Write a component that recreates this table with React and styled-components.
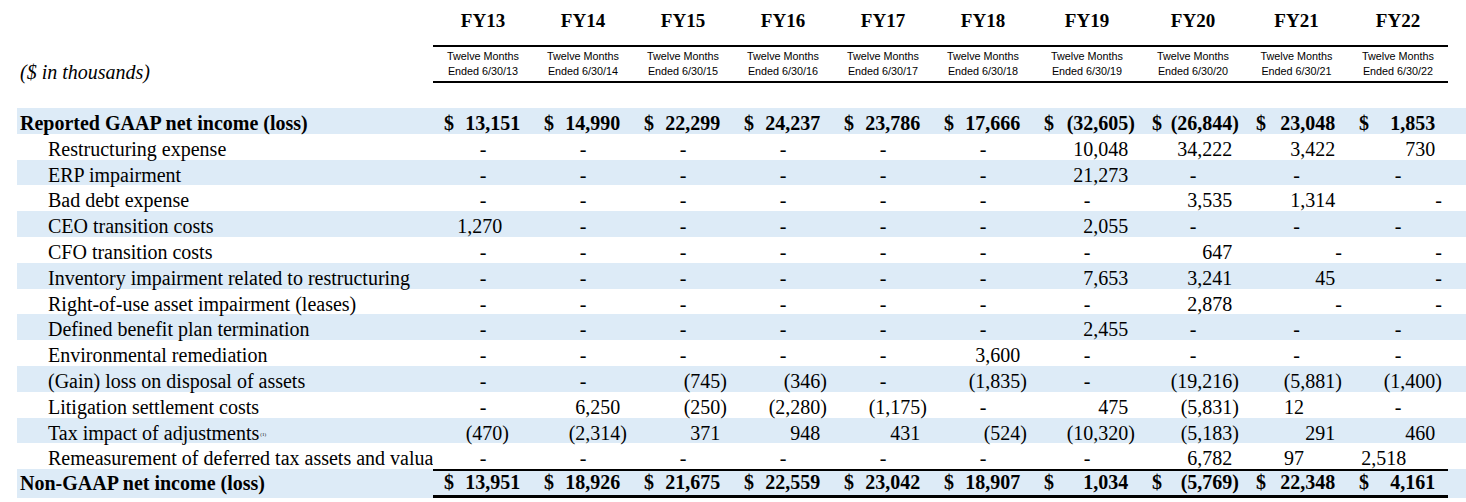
import React from 'react';
import styled, { createGlobalStyle } from 'styled-components';

const GlobalStyle = createGlobalStyle`
  html, body { margin: 0; padding: 0; background: #ffffff; }
  body {
    font-family: "Liberation Serif", "Times New Roman", serif;
    color: #000000;
  }
`;

const COLS = [100, 100, 100, 100, 100, 100, 108, 104, 103, 100];
const TEMPLATE = `416px ${COLS.map((c) => `${c}px`).join(' ')}`;
const SHADE = '#DDEBF7';

const Page = styled.div`
  padding-left: 17px;
  width: 1449px;
`;

const HeaderGrid = styled.div`
  display: grid;
  grid-template-columns: ${TEMPLATE};
`;

const Blank = styled.div``;

const YearCell = styled.div`
  height: 45px;
  line-height: 41px;
  text-align: center;
  font-weight: 700;
  font-size: 19px;
`;

const UnitsCell = styled.div`
  padding: 16px 0 0 3px;
  font-style: italic;
  font-size: 20px;
  line-height: 22px;
  white-space: nowrap;
`;

const PeriodCell = styled.div`
  border-top: 2px solid #000;
  border-bottom: 2px solid #000;
  padding: 2px 0;
  font-family: "Liberation Sans", Arial, sans-serif;
  font-size: 10.8px;
  line-height: 15px;
  text-align: center;
`;

const Body = styled.div`
  margin-top: 25px;
`;

const Row = styled.div`
  display: grid;
  grid-template-columns: ${TEMPLATE};
  height: ${(p) => (p.$total ? '28.4px' : '25.8px')};
  background: ${(p) => (p.$shade ? SHADE : 'transparent')};
  font-size: 20px;
  font-weight: ${(p) => (p.$bold ? 700 : 400)};
`;

const Label = styled.div`
  display: flex;
  align-items: center;
  padding-left: ${(p) => (p.$indent ? '31px' : '3px')};
  padding-top: ${(p) => (p.$total ? '1px' : '4px')};
  box-sizing: border-box;
  white-space: nowrap;
  overflow: hidden;
`;

const Note = styled.span`
  font-size: 5px;
  margin-left: 1px;
  align-self: center;
  padding-top: 2px;
`;

const JUSTIFY = {
  center: 'center',
  end: 'flex-end',
  start: 'flex-start',
  between: 'space-between',
  num: 'flex-end',
};

const ValueCell = styled.div`
  display: flex;
  align-items: center;
  justify-content: ${(p) => JUSTIFY[p.$align]};
  padding-left: ${(p) => p.$pl}px;
  padding-right: ${(p) => p.$pr}px;
  padding-top: ${(p) => (p.$total ? '0' : '4px')};
  white-space: nowrap;
  box-sizing: border-box;
  border-top: ${(p) => (p.$total ? '2px solid #000' : '0')};
  border-bottom: ${(p) => (p.$total ? '3px solid #000' : '0')};
`;

const Amount = styled.span`
  display: inline-flex;
`;

const Trail = styled.span`
  display: inline-block;
  width: 0.333em;
`;

const YEARS = ['FY13', 'FY14', 'FY15', 'FY16', 'FY17', 'FY18', 'FY19', 'FY20', 'FY21', 'FY22'];

const E = { v: '-', a: 'end' };

const ROWS = [
  {
    label: 'Reported GAAP net income (loss)',
    bold: true,
    dollar: true,
    values: ['13,151', '14,990', '22,299', '24,237', '23,786', '17,666', '(32,605)', '(26,844)', '23,048', '1,853'],
  },
  { label: 'Restructuring expense', values: ['-', '-', '-', '-', '-', '-', '10,048', '34,222', '3,422', '730'] },
  { label: 'ERP impairment', values: ['-', '-', '-', '-', '-', '-', '21,273', '-', '-', '-'] },
  { label: 'Bad debt expense', values: ['-', '-', '-', '-', '-', '-', '-', '3,535', '1,314', E] },
  { label: 'CEO transition costs', values: [{ v: '1,270', pr: 24 }, '-', '-', '-', '-', '-', '2,055', '-', '-', '-'] },
  { label: 'CFO transition costs', values: ['-', '-', '-', '-', '-', '-', '-', '647', E, E] },
  {
    label: 'Inventory impairment related to restructuring',
    values: ['-', '-', '-', '-', '-', '-', '7,653', '3,241', '45', E],
  },
  { label: 'Right-of-use asset impairment (leases)', values: ['-', '-', '-', '-', '-', '-', '-', '2,878', E, E] },
  { label: 'Defined benefit plan termination', values: ['-', '-', '-', '-', '-', '-', '2,455', '-', '-', '-'] },
  { label: 'Environmental remediation', values: ['-', '-', '-', '-', '-', '3,600', '-', '-', '-', '-'] },
  {
    label: '(Gain) loss on disposal of assets',
    values: ['-', '-', '(745)', '(346)', '-', '(1,835)', '-', '(19,216)', '(5,881)', '(1,400)'],
  },
  {
    label: 'Litigation settlement costs',
    values: ['-', '6,250', '(250)', '(2,280)', '(1,175)', '-', '475', '(5,831)', { v: '12', a: 'start' }, '-'],
  },
  {
    label: 'Tax impact of adjustments',
    note: '(1)',
    values: [{ v: '(470)', pr: 24 }, '(2,314)', '371', '948', '431', '(524)', '(10,320)', '(5,183)', '291', '460'],
  },
  {
    label: 'Remeasurement of deferred tax assets and valuation allowance',
    values: ['-', '-', '-', '-', '-', '-', '-', '6,782', { v: '97', a: 'start' }, { v: '2,518', pr: 35 }],
  },
  {
    label: 'Non-GAAP net income (loss)',
    bold: true,
    dollar: true,
    total: true,
    values: ['13,951', '18,926', '21,675', '22,559', '23,042', '18,907', '1,034', '(5,769)', '22,348', '4,161'],
  },
];

function Value({ spec, dollar, total }) {
  const s = typeof spec === 'string' ? { v: spec } : spec;
  const isDash = s.v === '-';
  const neg = s.v.startsWith('(');
  const align = dollar ? 'between' : s.a || (isDash ? 'center' : 'num');

  let pl = 0;
  let pr = 0;
  if (align === 'between') {
    pl = 11;
    pr = 6;
  } else if (align === 'num') {
    pr = s.pr ?? 6;
  } else if (align === 'end') {
    pr = 6;
  } else if (align === 'start') {
    pl = 39;
  }

  return (
    <ValueCell $align={align} $pl={pl} $pr={pr} $total={total}>
      {dollar && <span>$</span>}
      <Amount>
        {s.v}
        {!neg && !isDash && align !== 'start' && <Trail />}
      </Amount>
    </ValueCell>
  );
}

export default function App() {
  return (
    <>
      <GlobalStyle />
      <Page>
        <HeaderGrid>
          <Blank />
          {YEARS.map((y) => (
            <YearCell key={y}>{y}</YearCell>
          ))}
          <UnitsCell>($ in thousands)</UnitsCell>
          {YEARS.map((y) => (
            <PeriodCell key={y}>
              Twelve Months
              <br />
              Ended 6/30/{y.slice(2)}
            </PeriodCell>
          ))}
        </HeaderGrid>
        <Body>
          {ROWS.map((r, i) => (
            <Row key={r.label} $shade={i % 2 === 0} $bold={r.bold} $total={r.total}>
              <Label $indent={!r.bold} $total={r.total}>
                {r.label}
                {r.note && <Note>{r.note}</Note>}
              </Label>
              {r.values.map((v, j) => (
                <Value key={j} spec={v} dollar={r.dollar} total={r.total} />
              ))}
            </Row>
          ))}
        </Body>
      </Page>
    </>
  );
}
